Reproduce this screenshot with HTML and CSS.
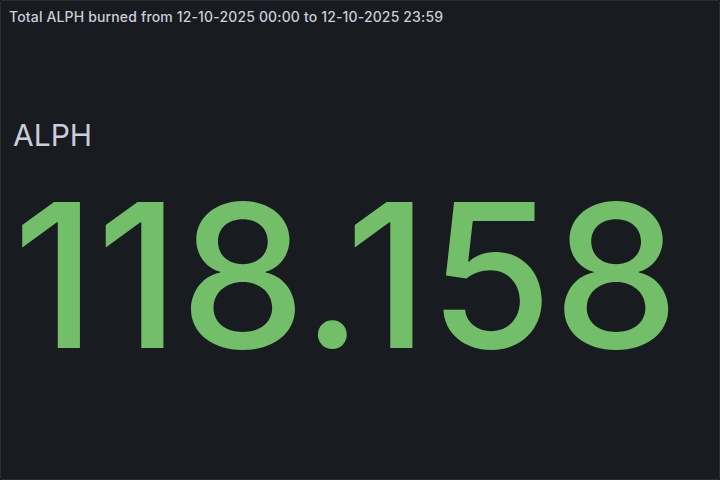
FILE: index.html
```html
<!DOCTYPE html>
<html lang="en">
<head>
    <meta charset="UTF-8">
    <meta name="viewport" content="width=device-width, initial-scale=1.0">
    <title>ALPH burned</title>
    <link rel="stylesheet" href="styles.css">
</head>
<body>
    <div class="panel">
        <div class="panel-header">
            <h2 class="panel-title">Total ALPH burned from 12-10-2025 00:00 to 12-10-2025 23:59</h2>
        </div>
        <div class="panel-content">
            <div class="stat-name">ALPH</div>
            <div class="stat-value">118.158</div>
        </div>
    </div>
</body>
</html>
```

FILE: styles.css
```css
html, body {
    margin: 0;
    height: 100%;
    background: #111217;
}
body {
    font-family: Inter, "Noto Sans", sans-serif;
    color: #ccccdc;
}
.panel {
    box-sizing: border-box;
    height: 480px;
    width: 720px;
    background: #181b1f;
    border: 1px solid #2b2e33;
    border-radius: 2px;
    display: flex;
    flex-direction: column;
}
.panel-header {
    height: 32px;
    padding: 0 8px;
    display: flex;
    align-items: center;
}
.panel-title {
    margin: 0;
    font-size: 14px;
    font-weight: 500;
    line-height: 1;
    letter-spacing: 0.15px;
}
.panel-content {
    flex: 1;
    padding: 0 12px 20px;
    display: flex;
    flex-direction: column;
    justify-content: center;
}
.stat-name {
    font-size: 30px;
    line-height: 1.2;
    font-weight: 400;
    margin-bottom: 22px;
}
.stat-value {
    font-size: 200px;
    font-weight: 500;
    color: #73bf69;
    line-height: 1;
    letter-spacing: 0.5px;
}
```
